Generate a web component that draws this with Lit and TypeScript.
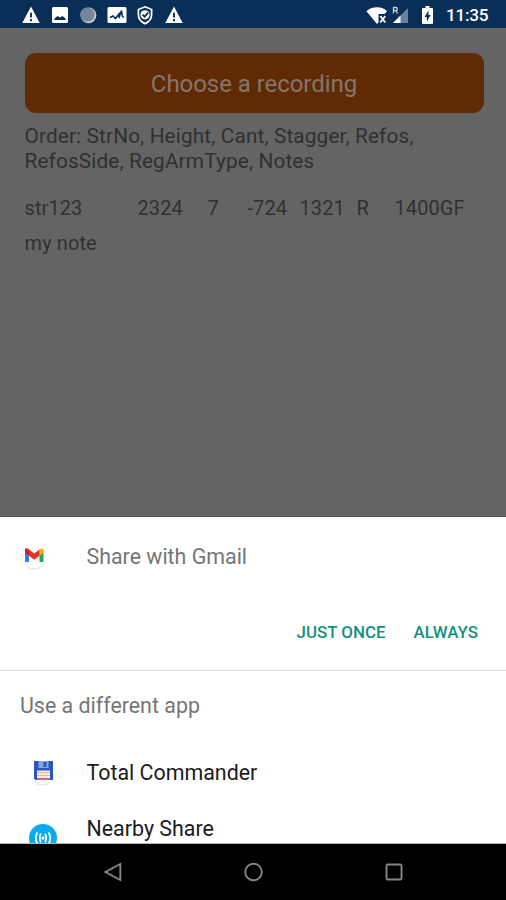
import { LitElement, html, css, svg } from "lit";
import { customElement } from "lit/decorators.js";

const warning = svg`<path d="M10 .5 19.2 18H.8z" fill="#fff"/><path d="M9 7h2v5.2H9zM9 13.8h2v2.2H9z" fill="#0a2f57"/>`;

@customElement("status-bar")
class StatusBar extends LitElement {
  static styles = css`
    :host { display: flex; align-items: center; height: 28px; box-sizing: border-box; padding: 2px 17px 0 21px; background: #092e57; color: #fff; }
    .left { display: flex; gap: 8.6px; flex: 1; }
    svg { display: block; width: 20px; height: 18px; overflow: visible; }
    .wifi { width: 22px; }
    .signal { width: 17px; margin-left: 4px; }
    .battery { width: 11px; margin: 0 13px 0 13px; }
    .time { width: 43px; font: 500 17.2px/22px Roboto, sans-serif; letter-spacing: -0.25px; white-space: nowrap; }
  `;
  render() {
    return html`
      <div class="left">
        <svg viewBox="0 0 20 19">${warning}</svg>
        <svg viewBox="0 0 20 18"><rect x="2" y="1" width="16" height="16" rx="1.5" fill="#fff"/><path d="M4.500 14v-1.500l3-2.500 2.500 1.500 2.500-1.500 3 2.500V14z" fill="#0a2f57"/></svg>
        <svg viewBox="0 0 20 18"><circle cx="10.5" cy="9.3" r="7.9" fill="#c5cbd0"/><circle cx="9.4" cy="8.6" r="7.2" fill="#74879a"/></svg>
        <svg viewBox="0 0 20 18"><rect x=".5" y="1" width="19" height="16" rx="1.5" fill="#fff"/><path d="m3 11.500 3-1.500 2.500 2.500L12 8v4l2.500-7.500 1 6 1.500 1" fill="none" stroke="#0a2f57" stroke-width="1.500"/></svg>
        <svg viewBox="0 0 20 18"><path d="m10 .8 6.600 2.700v5.200c0 4-2.700 7.200-6.600 8.900-3.900-1.700-6.600-4.900-6.600-8.900V3.500z" fill="none" stroke="#fff" stroke-width="1.700"/><circle cx="10" cy="8.800" r="4.600" fill="#fff"/><path d="m7.500 8.700 2 2 3.700-4" fill="none" stroke="#0a2f57" stroke-width="1.700"/></svg>
        <svg viewBox="0 0 20 19">${warning}</svg>
      </div>
      <svg class="wifi" viewBox="0 0 22 18"><path d="M.5 5.200C3 2.700 6.500 1.200 11 1.200S18.500 2.700 21 5.200L18.500 8H12.500v8.300L11 18z" fill="#fff"/><path d="m14.300 10 5 6.500m0-6.500-5 6.500" stroke="#fff" stroke-width="1.800"/></svg>
      <svg class="signal" viewBox="0 0 17 18"><path d="M16 2v15H1z" fill="#6c829a"/><path d="M8.500 9.500V17H1z" fill="#fff"/><path d="M1.500 7.500v-6h2.300q1.500 0 1.500 1.600T3.800 4.700H1.500m2.300 0 1.700 2.800" fill="none" stroke="#cbd3db" stroke-width="1.300"/></svg>
      <svg class="battery" viewBox="0 0 11 18"><path d="M3.500 0h4v2H10q1 0 1 1v14q0 1-1 1H1q-1 0-1-1V3q0-1 1-1h2.500z" fill="#fff"/><path d="M6.500 4.500 2.500 11h2.300v4.500L8.700 9H6.500z" fill="#0a2f57"/></svg>
      <span class="time">11:35</span>`;
  }
}

@customElement("recording-screen")
class RecordingScreen extends LitElement {
  static styles = css`
    :host { display: block; height: 489px; box-sizing: border-box; padding: 25px 23px 0 24.500px; background: #646464; color: #303030; font: 20px/26px Roboto, sans-serif; border-bottom: 1px solid #525252; }
    .choose { display: block; width: 459px; height: 59.500px; border: 0; border-radius: 11px; padding: 2px 0 0; background: #602a05; color: #85766c; font: 24px/30px Roboto, sans-serif; letter-spacing: -.05px; }
    .order { margin-top: 11px; font-size: 20.800px; line-height: 25.500px; letter-spacing: .13px; white-space: nowrap; }
    .record { margin-top: 20.900px; height: 62px; border-bottom: 1px solid #606060; width: 458px; }
    .row { display: grid; grid-template-columns: 113px 70px 40px 52px 57px 38px auto; letter-spacing: .08px; }
    .note { margin-top: 9px; letter-spacing: .1px; }
  `;
  render() {
    return html`
      <button class="choose">Choose a recording</button>
      <div class="order">Order: StrNo, Height, Cant, Stagger, Refos,<br />RefosSide, RegArmType, Notes</div>
      <div class="record">
        <div class="row">${["str123", "2324", "7", "-724", "1321", "R", "1400GF"].map((v) => html`<span>${v}</span>`)}</div>
        <div class="note">my note</div>
      </div>`;
  }
}

@customElement("share-sheet")
class ShareSheet extends LitElement {
  static styles = css`
    :host { display: block; height: 327px; box-sizing: border-box; overflow: hidden; background: #fff; color: #1b1b1b; font: 21.400px/28px Roboto, sans-serif; border-bottom: 1px solid #b5b5b5; }
    svg { display: block; flex: none; overflow: visible; }
    .main { height: 154px; box-sizing: border-box; border-bottom: 1px solid #dedede; padding-top: 26px; }
    .gmail { display: flex; padding-left: 20px; color: #757575; }
    .gmail svg { width: 28px; height: 28px; margin-right: 38.500px; }
    .actions { display: flex; justify-content: flex-end; gap: 28px; padding: 50px 28px 0 0; color: #16917c; font-weight: 500; font-size: 16.900px; line-height: 22px; }
    .other { padding: 22px 0 0 20px; color: #757575; line-height: 26px; }
    .app { display: flex; height: 56px; padding-left: 29px; }
    .app svg { width: 28px; height: 28px; margin-right: 29.500px; }
    .apps { padding-top: 40px; }
    .nearby svg { margin-top: 9px; }
  `;
  render() {
    return html`
      <div class="main">
        <div class="gmail">
          <svg viewBox="0 0 28 28"><circle cx="14" cy="14.500" r="12" fill="#e5e5e5"/><circle cx="14" cy="13" r="12.300" fill="#fff"/><path d="M5 7.500 9 10v9H6q-1 0-1-1z" fill="#347de8"/><path d="m19.500 10 4-2.500V18q0 1-1 1h-3z" fill="#25a653"/><path d="M19.500 6.500 21 5.600q2.500-1 2.500 1.600v2.500l-4 3z" fill="#fcb80c"/><path d="m9 6.500 5.200 4 5.300-4v6.200l-5.300 4-5.200-4z" fill="#e73327"/><path d="M5 7.200q0-2.600 2.500-1.600L9 6.500v6.200l-4-3z" fill="#c7221f"/></svg>
          <span>Share with Gmail</span>
        </div>
        <div class="actions"><span>JUST ONCE</span><span>ALWAYS</span></div>
      </div>
      <div class="other">Use a different app</div>
      <div class="apps">
        <div class="app">
          <svg viewBox="0 0 28 28"><circle cx="14" cy="14.500" r="12" fill="#e5e5e5"/><circle cx="14" cy="13" r="12.300" fill="#fff"/><path d="M5 2h19v19H6.500L5 19.500z" fill="#2857bd"/><path d="M9.500 2h10v7h-10z" fill="#8ba5dc"/><path d="M14.500 3h3v5h-3z" fill="#2857bd"/><path d="M8 11.500h13V19H8z" fill="#fbe8e4"/><path d="M8 13.500h13M8 16.500h13" stroke="#e9b5ab"/><path d="M8 19h13v2H8z" fill="#cc6972"/></svg>
          <span>Total Commander</span>
        </div>
        <div class="app nearby">
          <svg viewBox="0 0 28 28"><circle cx="14" cy="14" r="14" fill="#08aaf0"/><g fill="none" stroke="#fff" stroke-width="1.800"><path d="M8.300 8.500q-3 5.500 0 11M19.700 8.500q3 5.500 0 11M11.800 9.500q-2 4.500 0 9M16.200 9.500q2 4.500 0 9"/></g><path d="m14 11.800 1.700 2.200-1.700 2.200-1.700-2.200z" fill="#fff"/></svg>
          <span>Nearby Share</span>
        </div>
      </div>`;
  }
}

@customElement("nav-bar")
class NavBar extends LitElement {
  static styles = css`
    :host { display: flex; justify-content: center; gap: 120px; height: 56px; box-sizing: border-box; padding-top: 18px; background: #000; }
    svg { width: 20px; height: 20px; fill: none; stroke: #858585; stroke-width: 1.900; }
  `;
  render() {
    return html`
      <svg viewBox="0 0 20 20"><path d="M17.300 2v16L2.500 10z"/></svg>
      <svg viewBox="0 0 20 20"><circle cx="10.500" cy="10" r="8.300"/></svg>
      <svg viewBox="0 0 20 20"><rect x="3.500" y="2.500" width="15" height="15" rx="1"/></svg>`;
  }
}

@customElement("app-root")
class AppRoot extends LitElement {
  static styles = css`:host { display: block; width: 506px; height: 900px; overflow: hidden; background: #000; }`;
  render() {
    return html`<status-bar></status-bar><recording-screen></recording-screen><share-sheet></share-sheet><nav-bar></nav-bar>`;
  }
}
